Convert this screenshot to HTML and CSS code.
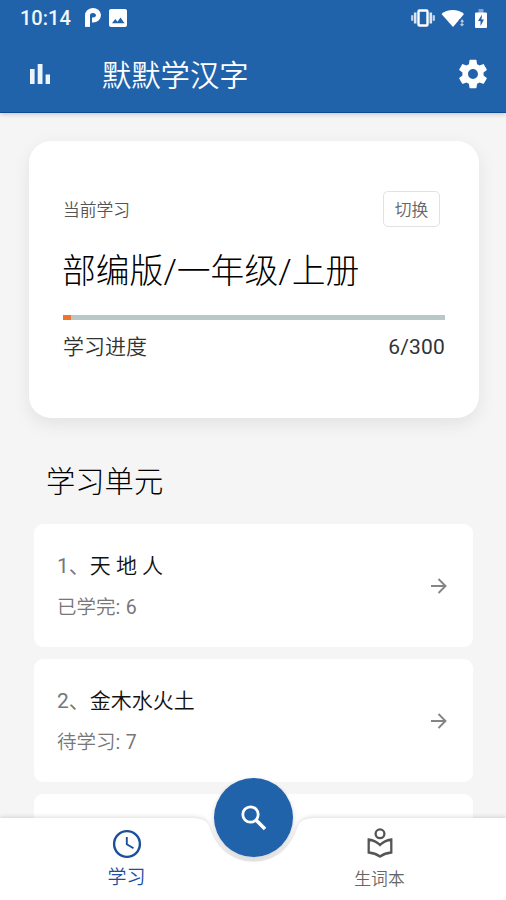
FILE: index.html
```html
<!DOCTYPE html>
<html lang="zh-CN">
<head>
<meta charset="utf-8">
<title>默默学汉字</title>
<link rel="stylesheet" href="styles.css">
</head>
<body>
<div class="app">
  <header class="header">
    <div class="status">
      <span class="time">10:14</span>
      <svg class="st-p" width="18" height="22" viewBox="0 0 18 22"><path d="M3.500 19.500V8.500A5.500 4.800 0 1 1 9 13H8" fill="none" stroke="#fff" stroke-width="5"/><path d="M1 12.500h5v7.300H1z" fill="#fff"/></svg>
      <svg class="st-img" width="18" height="18" viewBox="0 0 18 18"><rect width="18" height="18" rx="2" fill="#fff"/><path d="M3 14.300l3.200-4.300 2.300 2.700 3-4.200 4 5.800z" fill="#2163ab"/></svg>
      <span class="grow"></span>
      <svg class="st-vib" width="24" height="18" viewBox="0 0 24 18"><rect x="7.500" y="1.500" width="9" height="15" rx="1" fill="none" stroke="#fff" stroke-width="2.400"/><path d="M4.200 3.500v11M19.800 3.500v11" stroke="#d9e5f4" stroke-width="2.600"/><path d="M1.200 6.200v5.600M22.800 6.200v5.600" stroke="#c3d5ea" stroke-width="2.200"/></svg>
      <svg class="st-wifi" width="24" height="19" viewBox="0 0 24 19"><path d="M0.500 5C6-.300 17.500-.300 23 5L18.500 10.500 12 18z" fill="#fff"/><path d="M18.500 10H24v8h-6.500l-1-4z" fill="#2163ab"/><path d="M21 10l2 2.500-2 1.500-1.500-1.500zM19 15.500l2-1.500 2 1.500-2 2z" fill="#b4cae4"/></svg>
      <svg class="st-bat" width="12" height="19" viewBox="0 0 12 19"><path d="M3.500 0h5v4h-5z" fill="#7fa5d0"/><rect y="3.500" width="12" height="15.500" rx="1" fill="#fff"/><path d="M7 5.500L3 12h2.500v5L9 10.500H6.500z" fill="#2163ab"/></svg>
    </div>
    <div class="toolbar">
      <svg class="chart" width="20" height="20" viewBox="0 0 20 20"><path d="M0 5h4.600v15H0zM7.700 0h4.800v20H7.700zM15.600 10.500H20V20h-4.400z" fill="#eef4fb"/></svg>
      <h1 class="app-title">默默学汉字</h1>
      <svg class="gear" width="34" height="34" viewBox="0 0 24 24"><path fill="#fff" d="M19.430 12.980c.04-.32.07-.64.07-.98s-.03-.66-.07-.98l2.110-1.650c.19-.15.24-.42.12-.64l-2-3.460c-.12-.22-.39-.3-.61-.22l-2.490 1c-.52-.4-1.080-.73-1.690-.98l-.38-2.650C14.460 2.180 14.250 2 14 2h-4c-.25 0-.46.18-.49.42l-.38 2.650c-.61.25-1.170.59-1.690.98l-2.490-1c-.23-.09-.49 0-.61.22l-2 3.460c-.13.22-.07.49.12.64l2.110 1.650c-.04.32-.07.65-.07.98s.03.66.07.98l-2.110 1.650c-.19.15-.24.42-.12.64l2 3.460c.12.22.39.3.61.22l2.490-1c.52.4 1.080.73 1.690.98l.38 2.650c.03.24.24.42.49.42h4c.25 0 .46-.18.49-.42l.38-2.650c.61-.25 1.170-.59 1.690-.98l2.490 1c.23.09.49 0 .61-.22l2-3.460c.12-.22.07-.49-.12-.64l-2.110-1.650zM12 15.500c-1.930 0-3.500-1.570-3.500-3.500s1.570-3.500 3.500-3.500 3.500 1.570 3.500 3.500-1.570 3.500-3.500 3.500z"/></svg>
    </div>
  </header>

  <main class="content">
    <section class="card">
      <div class="card-top">
        <span class="label">当前学习</span>
        <button class="switch">切换</button>
      </div>
      <h2 class="course">部编版/一年级/上册</h2>
      <div class="track"><div class="fill" style="width:2%"></div></div>
      <div class="progress-row"><span>学习进度</span><span class="count">6/300</span></div>
    </section>

    <h2 class="section-title">学习单元</h2>

    <div class="units">
      <article class="unit">
        <div>
          <div class="unit-name"><span class="num">1、</span>天 地 人</div>
          <div class="unit-state">已学完<span class="left">: 6</span></div>
        </div>
        <svg class="arrow" width="16" height="16" viewBox="0 0 16 16"><path d="M0 8h14.500M7.500 1l7 7-7 7" fill="none" stroke="#858585" stroke-width="1.900"/></svg>
      </article>
      <article class="unit">
        <div>
          <div class="unit-name"><span class="num">2、</span>金木水火土</div>
          <div class="unit-state">待学习<span class="left">: 7</span></div>
        </div>
        <svg class="arrow" width="16" height="16" viewBox="0 0 16 16"><path d="M0 8h14.500M7.500 1l7 7-7 7" fill="none" stroke="#858585" stroke-width="1.900"/></svg>
      </article>
      <article class="unit"></article>
    </div>
  </main>

  <nav class="nav">
    <svg class="nav-bg" width="506" height="92" viewBox="0 -10 506 92"><path d="M0 0H190C201 0 207 2 209.500 9C216 30 232 43.500 253.500 43.500S291 30 297.500 9C300 2 306 0 317 0H506V82H0z" fill="#fff"/></svg>
    <button class="fab">
      <svg width="26" height="26" viewBox="0 0 26 26"><circle cx="9.500" cy="9.500" r="7.700" fill="none" stroke="#fff" stroke-width="2.800"/><path d="M15 15l9 9" stroke="#fff" stroke-width="3.600"/></svg>
    </button>
    <div class="tabs">
      <a class="tab active">
        <svg width="30" height="30" viewBox="0 0 30 30" fill="none" stroke="#1c4f9c"><circle cx="15" cy="15" r="12.900" stroke-width="2.400"/><path d="M14.800 8v7.300l6.700 4" stroke-width="1.900"/></svg>
        <span>学习</span>
      </a>
      <a class="tab">
        <svg width="28" height="32" viewBox="0 0 28 32" fill="none" stroke="#555" stroke-width="2.300"><circle cx="14" cy="6.800" r="4.400"/><path d="M2.700 12.500Q9.500 13.500 14 18Q18.500 13.500 25.300 12.500V25.500Q19 26 14 29.500Q9 26 2.700 25.500z"/></svg>
        <span>生词本</span>
      </a>
    </div>
  </nav>
</div>
</body>
</html>
```
FILE: styles.css
```css
* { box-sizing: border-box; }
body {
  margin: 0;
  font-family: Roboto, "Noto Sans CJK SC", sans-serif;
  font-weight: 350;
  color: #111;
  background: #f5f5f5;
}
h1, h2 { margin: 0; font-weight: 350; }
button { font-family: inherit; font-weight: 350; padding: 0; }
svg { display: block; flex: none; }
.app {
  position: relative;
  width: 506px;
  height: 900px;
  overflow: hidden;
}
.header {
  position: relative;
  height: 113px;
  background: #2163ab;
  border-bottom: 1px solid #0f4a93;
  box-shadow: 0 1px 5px rgba(0, 0, 0, .22);
}
.status {
  display: flex;
  align-items: center;
  height: 36px;
  padding: 0 19px 0 20px;
}
.time {
  width: 64px;
  font-size: 20px;
  font-weight: 500;
  line-height: 36px;
  color: #f2f7fd;
}
.st-img { margin-left: 7px; }
.grow { flex: 1; }
.st-wifi { margin-left: 6px; }
.st-bat { margin-left: 10px; }
.toolbar {
  display: flex;
  align-items: center;
  height: 76px;
  padding: 0 16px 0 30px;
}
.app-title {
  flex: 1;
  margin-left: 52px;
  padding-top: 4px;
  color: #fff;
  font-size: 29.300px;
  line-height: 44px;
}
.content { padding-top: 28px; }
.card {
  width: 450px;
  height: 277px;
  margin-left: 29px;
  padding: 50px 34px 0;
  border-radius: 22px;
  background: #fff;
  box-shadow: 0 6px 18px rgba(0, 0, 0, .08);
}
.card-top {
  display: flex;
  align-items: center;
  justify-content: space-between;
  height: 36px;
  padding-right: 5px;
}
.label { font-size: 16.800px; color: #555; }
.switch {
  width: 57px;
  height: 36px;
  border: 1.500px solid #e2e2e2;
  border-radius: 5px;
  background: #fff;
  font-size: 16.800px;
  color: #666;
}
.course {
  height: 50px;
  margin-top: 20px;
  margin-left: -1px;
  font-size: 33.800px;
  font-weight: 300;
  line-height: 50px;
  color: #000;
  white-space: nowrap;
}
.track { height: 5px; margin-top: 18px; background: #b7c8c6; }
.fill { height: 5px; background: #ee742d; }
.progress-row {
  display: flex;
  justify-content: space-between;
  height: 30px;
  margin-top: 12px;
  font-size: 21px;
  line-height: 30px;
  color: #333;
}
.count { letter-spacing: .2px; font-weight: 400; }
.section-title {
  height: 44px;
  margin: 42px 0 0 46px;
  font-size: 29.300px;
  font-weight: 300;
  line-height: 44px;
  color: #000;
}
.units {
  display: flex;
  flex-direction: column;
  gap: 12px;
  width: 439px;
  margin: 20px 0 0 34px;
}
.unit {
  display: flex;
  align-items: center;
  justify-content: space-between;
  height: 123px;
  padding: 0 26px 0 23px;
  border-radius: 9px;
  background: #fff;
}
.unit > div { padding-top: 2px; }
.unit-name { height: 41px; line-height: 41px; font-size: 21px; white-space: pre; }
.num { color: #777; font-weight: 400; }
.unit-state { height: 41px; line-height: 41px; font-size: 19.500px; color: #777; }
.left { font-weight: 400; letter-spacing: .3px; }
.nav {
  position: absolute;
  left: 0;
  bottom: 0;
  width: 506px;
  height: 82px;
}
.nav-bg {
  position: absolute;
  left: 0;
  top: -10px;
  filter: drop-shadow(0 -1px 2px rgba(0, 0, 0, .14));
}
.fab {
  position: absolute;
  left: 214px;
  top: -40px;
  display: flex;
  align-items: center;
  justify-content: center;
  width: 79px;
  height: 79px;
  border: 0;
  border-radius: 50%;
  background: #2163ab;
  box-shadow: 0 2px 5px rgba(0, 0, 0, .18);
}
.tabs {
  position: relative;
  display: flex;
  justify-content: space-between;
  pointer-events: none;
}
.tab {
  display: flex;
  flex-direction: column;
  align-items: center;
  width: 253px;
  padding-top: 9px;
  font-size: 16.800px;
  line-height: 24px;
  color: #666;
}
.tab.active { padding-top: 11px; font-size: 19px; color: #1c4f9c; }
.tab span { margin-top: 8px; }
.tab.active span { margin-top: 7px; }
```
